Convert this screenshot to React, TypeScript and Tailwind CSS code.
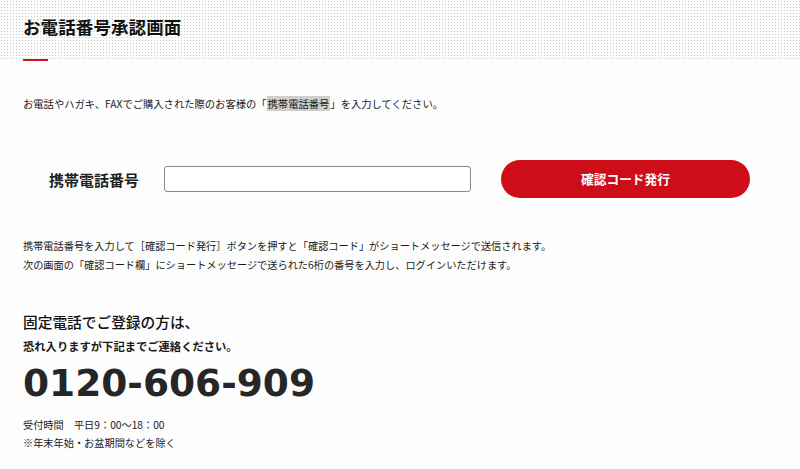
import React from 'react';

const jp = { fontFamily: '"Noto Sans CJK JP", "Noto Sans", sans-serif' };

const App = () => {
  return (
    <div className="min-h-[469px] w-[800px] bg-[#fdfdfd] text-[#1a1a1a]" style={jp}>
      {/* Header */}
      <header className="h-[61px] px-[23px] flex flex-col bg-[#fdfdfd] bg-[radial-gradient(#c8c8c8_0.8px,transparent_0.9px)] bg-[length:3px_3px]">
        <h1 className="mt-[18px] text-[17.5px] leading-[18px] font-bold tracking-[0.1px] text-[#111]">
          お電話番号承認画面
        </h1>
        <div className="mt-auto w-[25px] h-[2px] bg-[#d0101b]" />
      </header>

      <main className="px-[23px]">
        <p className="mt-[35px] text-[10.3px] leading-[16px]">
          お電話やハガキ、FAXでご購入された際のお客様の「
          <span className="bg-[#cfcfcf] px-[1px]">携帯電話番号</span>
          」を入力してください。
        </p>

        {/* Phone input row */}
        <div className="mt-[48px] flex items-center h-[38px] pl-[26px]">
          <label className="w-[115px] text-[15px] font-bold leading-none text-[#222]">携帯電話番号</label>
          <input
            type="tel"
            className="w-[307px] h-[26px] border border-[#8a8a8a] rounded-[3px] bg-white px-2 text-[12px] outline-none"
          />
          <button className="ml-[30px] w-[249px] h-[38px] rounded-full bg-[#cd0e19] text-white text-[12.7px] font-bold leading-none">
            確認コード発行
          </button>
        </div>

        <div className="mt-[38px] text-[10.2px] leading-[19px]">
          <p>携帯電話番号を入力して［確認コード発行］ボタンを押すと「確認コード」がショートメッセージで送信されます。</p>
          <p>次の画面の「確認コード欄」にショートメッセージで送られた6桁の番号を入力し、ログインいただけます。</p>
        </div>

        {/* Landline contact */}
        <h2 className="mt-[38px] text-[14.7px] leading-[20px] font-medium text-[#111]">固定電話でご登録の方は、</h2>
        <p className="mt-[6px] text-[11.3px] leading-[16px] font-bold">恐れ入りますが下記までご連絡ください。</p>
        <p
          className="mt-[9px] text-[37.5px] leading-[40px] font-bold text-[#262626]"
          style={{ fontFamily: '"DejaVu Sans", Verdana, sans-serif' }}
        >
          0120-606-909
        </p>
        <div className="mt-[13px] text-[10.2px] leading-[18px]">
          <p>受付時間　平日9：00〜18：00</p>
          <p>※年末年始・お盆期間などを除く</p>
        </div>
      </main>
    </div>
  );
};

export default App;
